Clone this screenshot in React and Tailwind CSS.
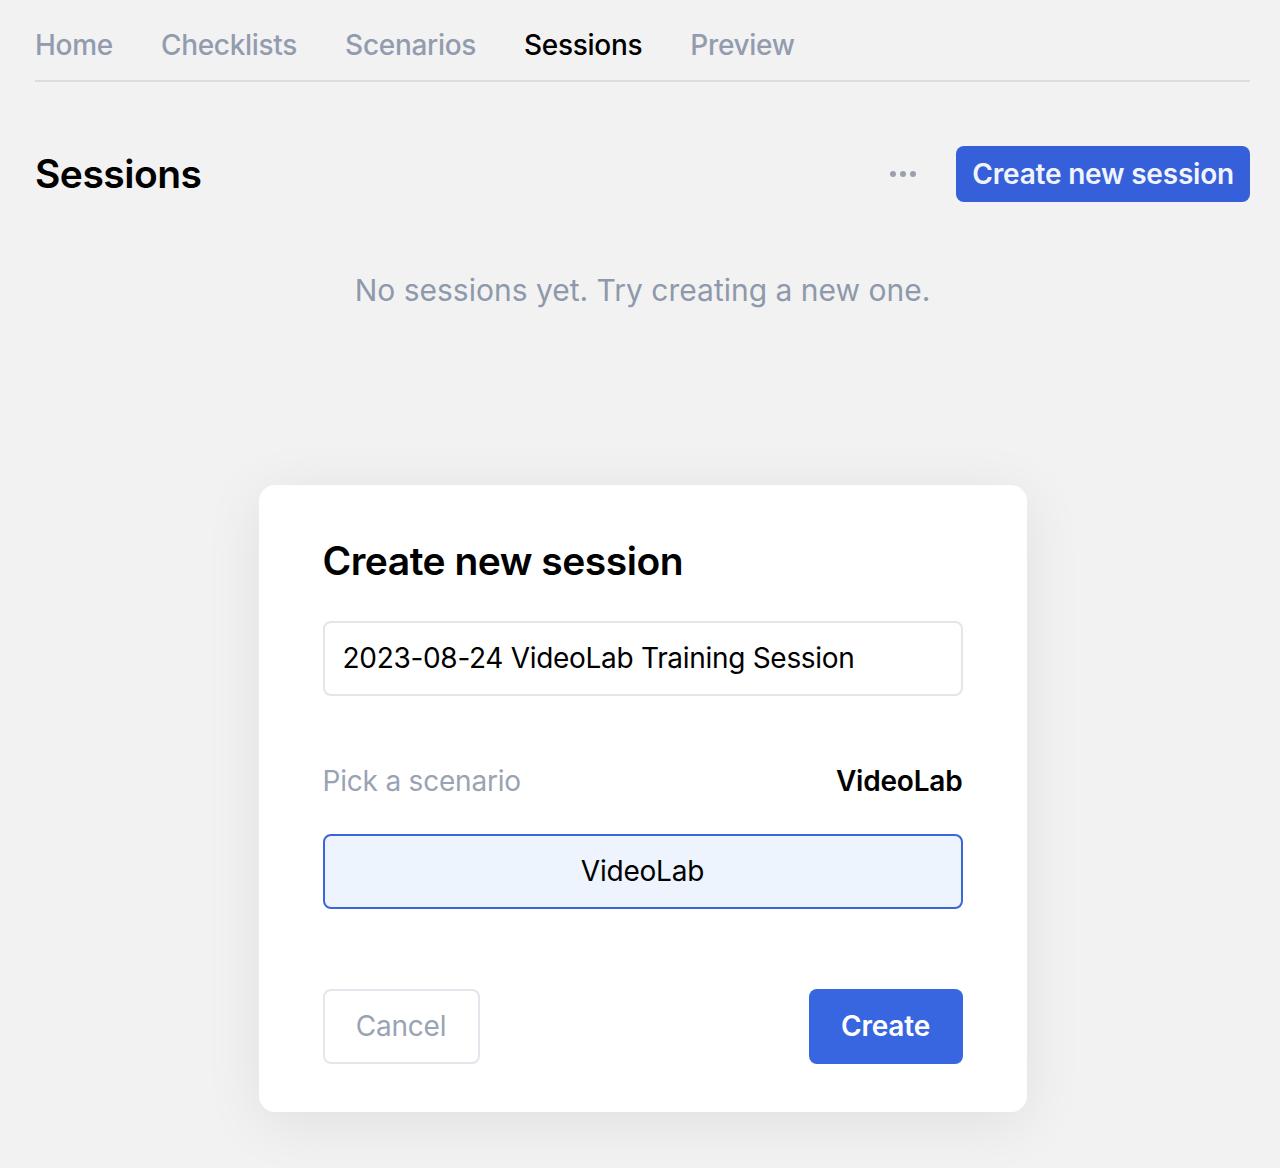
import { useState } from "react"

const tabs = ["Home", "Checklists", "Scenarios", "Sessions", "Preview"]

export default function App() {
    const [active] = useState("Sessions")
    const [name, setName] = useState("2023-08-24 VideoLab Training Session")

    return (
        <div className="min-h-[1168px] bg-[#f2f2f2] pl-[35px] pr-[30px] pt-[26px] font-['Inter','Liberation_Sans',sans-serif] antialiased tracking-[-0.2px]">
            {/* Nav */}
            <nav className="flex gap-[48px] border-b-2 border-[#dcdce0] pb-[16px]">
                {tabs.map(t => (
                    <a
                        key={t}
                        className={`text-[28px] leading-[38px] font-medium tracking-[-0.3px] ${t === active ? "text-black" : "text-[#929cae]"}`}
                    >
                        {t}
                    </a>
                ))}
            </nav>

            {/* Header */}
            <div className="flex items-center justify-between mt-[63px]">
                <h1 className="text-[39px] font-semibold text-black tracking-[-0.5px]">Sessions</h1>
                <div className="flex items-center gap-[40px]">
                    <button className="flex gap-[4px] items-center">
                        <span className="w-[6px] h-[6px] rounded-full bg-[#9aa1ad]" />
                        <span className="w-[6px] h-[6px] rounded-full bg-[#9aa1ad]" />
                        <span className="w-[6px] h-[6px] rounded-full bg-[#9aa1ad]" />
                    </button>
                    <button className="h-[56px] px-[16px] rounded-[8px] bg-[#3660d9] text-[#f1f4fc] text-[28px] font-semibold">
                        Create new session
                    </button>
                </div>
            </div>

            <p className="text-center text-[30px] text-[#8e99ab] mt-[64px] tracking-normal">No sessions yet. Try creating a new one.</p>

            {/* Modal */}
            <div className="mx-auto mt-[172px] w-[768px] bg-white rounded-[16px] shadow-[0_10px_60px_rgba(0,0,0,0.08)] px-[64px] pt-[52px] pb-[48px]">
                <h2 className="text-[39px] font-semibold text-black tracking-[-0.5px] leading-[48px]">Create new session</h2>
                <input
                    value={name}
                    onChange={e => setName(e.target.value)}
                    className="mt-[36px] w-full h-[75px] px-[18px] border-2 border-[#e4e4ea] rounded-[8px] text-[28px] text-black outline-none tracking-[-0.3px]"
                />
                <div className="flex justify-between items-center mt-[64px]">
                    <span className="text-[28px] text-[#9aa3b3]">Pick a scenario</span>
                    <span className="text-[28px] font-semibold text-black">VideoLab</span>
                </div>
                <button className="mt-[32px] w-full h-[75px] rounded-[8px] border-2 border-[#3a65db] bg-[#eef4fd] text-[28px] text-black">
                    VideoLab
                </button>
                <div className="flex justify-between mt-[80px]">
                    <button className="h-[75px] w-[157px] rounded-[8px] border-2 border-[#e3e6ed] text-[28px] text-[#9aa3b3]">
                        Cancel
                    </button>
                    <button className="h-[75px] w-[154px] rounded-[8px] bg-[#3866e0] text-[28px] font-semibold text-white">
                        Create
                    </button>
                </div>
            </div>
        </div>
    )
}
